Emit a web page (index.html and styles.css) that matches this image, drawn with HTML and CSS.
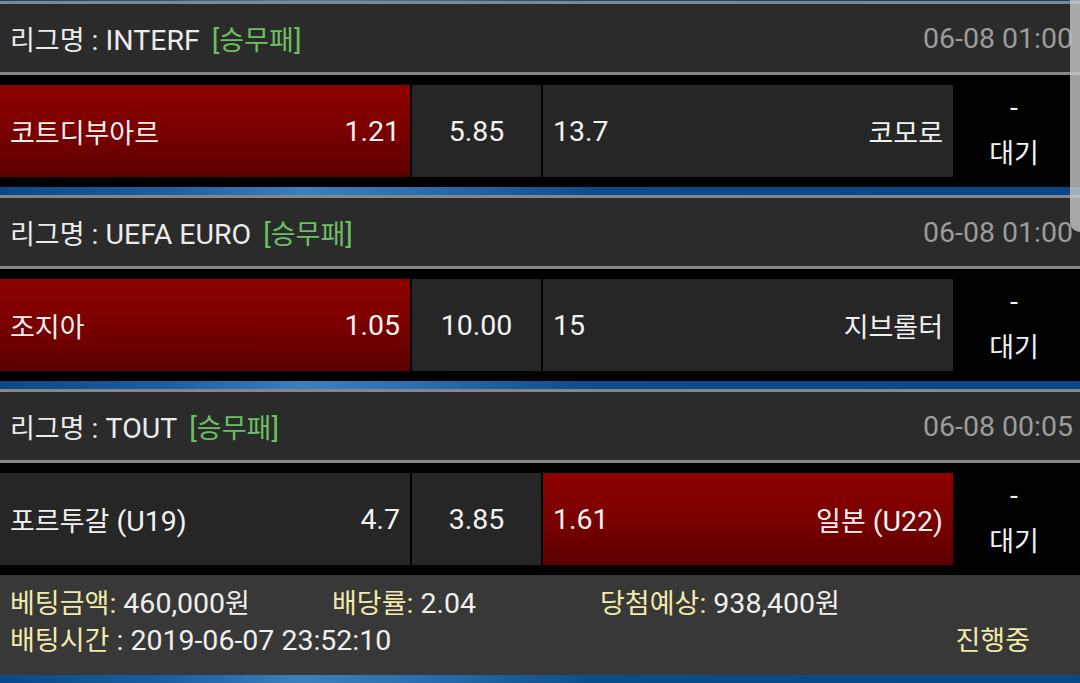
FILE: index.html
```html
<!DOCTYPE html>
<html lang="ko">
<head>
<meta charset="utf-8">
<title>베팅내역</title>
<link rel="stylesheet" href="styles.css">
</head>
<body>
<div class="screen">
  <div class="bar bar--clip"></div>

  <section class="card">
    <div class="head">
      <div class="league"><span class="ko">리그명</span> : INTERF<span class="type">[<span class="ko">승무패</span>]</span></div>
      <div class="date">06-08 01:00</div>
    </div>
    <div class="row">
      <div class="btn btn--sel"><span class="ko">코트디부아르</span><span>1.21</span></div>
      <div class="btn btn--draw">5.85</div>
      <div class="btn"><span>13.7</span><span class="ko">코모로</span></div>
      <div class="status"><div>-</div><div class="ko">대기</div></div>
    </div>
    <div class="bar"></div>
  </section>

  <section class="card">
    <div class="head">
      <div class="league"><span class="ko">리그명</span> : UEFA EURO<span class="type">[<span class="ko">승무패</span>]</span></div>
      <div class="date">06-08 01:00</div>
    </div>
    <div class="row">
      <div class="btn btn--sel"><span class="ko">조지아</span><span>1.05</span></div>
      <div class="btn btn--draw">10.00</div>
      <div class="btn"><span>15</span><span class="ko">지브롤터</span></div>
      <div class="status"><div>-</div><div class="ko">대기</div></div>
    </div>
    <div class="bar"></div>
  </section>

  <section class="card">
    <div class="head">
      <div class="league"><span class="ko">리그명</span> : TOUT<span class="type">[<span class="ko">승무패</span>]</span></div>
      <div class="date">06-08 00:05</div>
    </div>
    <div class="row">
      <div class="btn"><span><span class="ko">포르투갈</span> (U19)</span><span>4.7</span></div>
      <div class="btn btn--draw">3.85</div>
      <div class="btn btn--sel"><span>1.61</span><span><span class="ko">일본</span> (U22)</span></div>
      <div class="status"><div>-</div><div class="ko">대기</div></div>
    </div>
  </section>

  <footer class="summary">
    <div class="sum-row">
      <div class="sum-item sum-item--a"><span class="label"><span class="ko">베팅금액</span>:</span> 460,000<span class="ko">원</span></div>
      <div class="sum-item sum-item--b"><span class="label"><span class="ko">배당률</span>:</span> 2.04</div>
      <div class="sum-item"><span class="label"><span class="ko">당첨예상</span>:</span> 938,400<span class="ko">원</span></div>
    </div>
    <div class="sum-row">
      <div class="sum-time"><span class="label ko">배팅시간</span> : 2019-06-07 23:52:10</div>
      <div class="progress ko">진행중</div>
    </div>
  </footer>
  <div class="bar"></div>

  <div class="scrollbar"></div>
</div>
</body>
</html>
```

FILE: styles.css
```css
* { box-sizing: border-box; }

html, body {
  margin: 0;
  padding: 0;
  background: #000;
}

body {
  font-family: Roboto, "Noto Sans CJK KR", sans-serif;
  font-size: 28.5px;
  color: #efefef;
}

.screen {
  position: relative;
  width: 1080px;
  height: 683px;
  overflow: hidden;
  background: #000;
}

.ko {
  font-family: "Noto Sans CJK KR", Roboto, sans-serif;
  font-size: 27px;
}

.bar {
  height: 8px;
  background: linear-gradient(90deg, #0a4888 0%, #1a5ea2 15%, #3a7fc0 28%, #2a70b2 38%, #0b4c8e 55%, #08478a 100%);
}

.bar--clip {
  height: 1px;
}

.head {
  height: 74px;
  display: flex;
  align-items: center;
  justify-content: space-between;
  padding: 0 7px 0 10px;
  background: #2b2b2b;
  border-top: 3px solid #868686;
  border-bottom: 3px solid #868686;
  white-space: nowrap;
}

.league {
  color: #ececec;
}

.type {
  color: #6cbf62;
  margin-left: 12px;
}

.date {
  color: #9c9c9c;
}

.row {
  display: flex;
  gap: 2px;
  padding: 10px 0;
  background: #000;
}

.btn {
  height: 92px;
  width: 410px;
  flex: none;
  display: flex;
  align-items: center;
  justify-content: space-between;
  padding: 0 10px;
  background: #262626;
  color: #f2f2f2;
  white-space: nowrap;
}

.btn--draw {
  width: 129px;
  justify-content: center;
}

.btn--sel {
  background: linear-gradient(180deg, #8e0000 0%, #7a0000 50%, #5c0000 100%);
}

.status {
  flex: 1;
  height: 92px;
  display: flex;
  flex-direction: column;
  justify-content: center;
  align-items: center;
  padding: 0 7px 3px 0;
  line-height: 44px;
  color: #f2f2f2;
}

.summary {
  height: 100px;
  background: #383838;
  padding: 8px 10px 0 10px;
}

.sum-row {
  display: flex;
  align-items: center;
  height: 37px;
  white-space: nowrap;
}

.sum-item--a { width: 322px; }
.sum-item--b { width: 268px; }

.label {
  color: #f2eaa8;
}

.sum-time {
  flex: 1;
}

.progress {
  color: #f2eaa8;
  margin-right: 40px;
}

.scrollbar {
  position: absolute;
  top: 0;
  right: 0;
  width: 10px;
  height: 232px;
  background: rgba(200, 200, 200, 0.8);
  border-radius: 0 0 0 10px;
}
```
